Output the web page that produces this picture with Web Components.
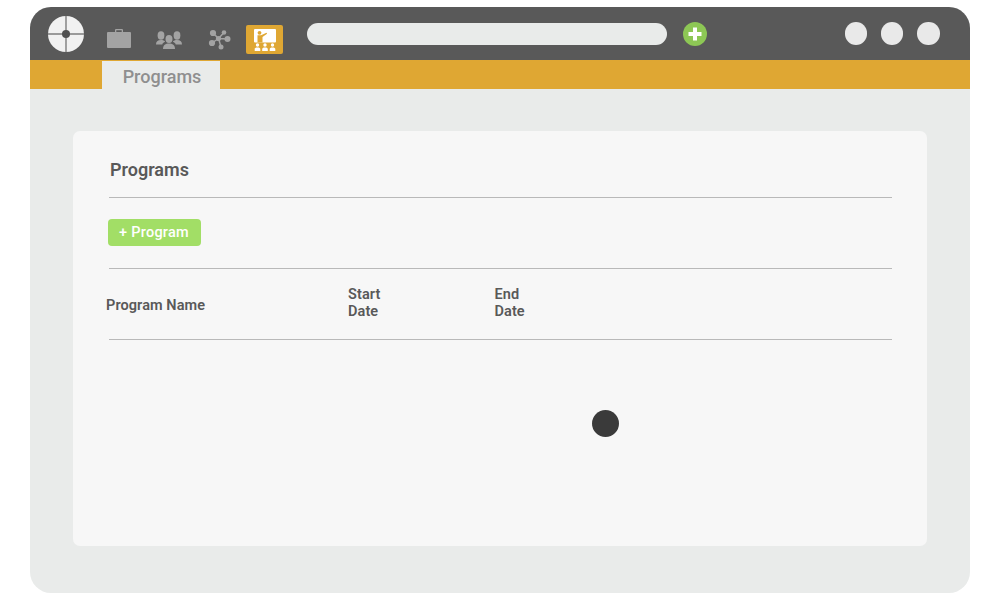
<!DOCTYPE html>
<html>
<head>
<meta charset="utf-8">
<title>Programs</title>
<style>
  html, body { margin: 0; height: 100%; background: #fff; font-family: Roboto, "Liberation Sans", sans-serif; }
  body { padding: 7px 30px; box-sizing: border-box; height: 600px; overflow: hidden; }
</style>
</head>
<body>
<app-window>
  <top-bar slot="top"></top-bar>
  <tab-strip slot="top" label="Programs"></tab-strip>
  <programs-card></programs-card>
</app-window>

<script>
class AppWindow extends HTMLElement {
  constructor () {
    super();
    this.attachShadow({mode: 'open'}).innerHTML = `
    <style>
      :host {
        display: flex;
        flex-direction: column;
        height: 586px;
        background: #e9ebea;
        border-radius: 21px;
        overflow: hidden;
      }
      main {
        flex: 1;
        padding: 42px 43px 47px;
        display: flex;
      }
    </style>
    <slot name="top"></slot>
    <main><slot></slot></main>
    `;
  }
}

class TopBar extends HTMLElement {
  constructor () {
    super();
    this.attachShadow({mode: 'open'}).innerHTML = `
    <style>
      :host {
        display: flex;
        align-items: center;
        height: 53px;
        box-sizing: border-box;
        background: #595959;
        padding: 0 30.5px 0 17.5px;
      }
      svg { display: block; flex: none; }
      .logo { margin: 1px 23.5px 0 0; }
      .brief { margin: 10px 24px 0 0; }
      .people { margin: 13px 24px 0 0; }
      .net { margin: 11px 15px 0 0; }
      .active {
        width: 37px;
        height: 29px;
        margin: 12px 24px 0 0;
        background: #dfa733;
        border-radius: 2px;
        display: flex;
        align-items: center;
        justify-content: center;
        flex: none;
      }
      .search {
        width: 360px;
        height: 22px;
        margin-top: 1px;
        border-radius: 11px;
        background: #e9ebea;
        flex: none;
      }
      .plus { margin-left: 16px; }
      .dots { margin-left: auto; display: flex; gap: 13.7px; }
      .dots span { width: 22.5px; height: 22.5px; border-radius: 50%; background: #e9e9e9; }
    </style>
    <svg class="logo" width="36" height="36" viewBox="0 0 36 36">
      <circle cx="18" cy="18" r="18" fill="#f1f1f1"/>
      <path d="M0 18H36M18 0V36" stroke="#7d7d7d" stroke-width="1.4"/>
      <circle cx="18" cy="18" r="4" fill="#505050"/>
    </svg>
    <svg class="brief" width="24" height="19" viewBox="0 0 24 19" fill="#a3a3a3">
      <path d="M8 3V1.200C8 .5 8.500 0 9.200 0h5.600c.7 0 1.200.5 1.200 1.200V3h-1.300V1.300H9.300V3z"/>
      <rect y="3" width="24" height="16" rx="1"/>
    </svg>
    <svg class="people" width="28" height="18" viewBox="0 0 28 18" fill="#a3a3a3">
      <ellipse cx="6" cy="4.500" rx="3.400" ry="4.200"/>
      <path d="M1 13.500c0-3 1.500-4.500 5-4.500 2 0 3.500.5 4.200 1.800C8.500 11.500 7.500 12.300 7.300 13.500z"/>
      <ellipse cx="22" cy="4.500" rx="3.400" ry="4.200"/>
      <path d="M27 13.500c0-3-1.500-4.500-5-4.500-2 0-3.500.5-4.200 1.800 1.700.7 2.700 1.500 2.900 2.700z"/>
      <ellipse cx="14" cy="8" rx="3.500" ry="4"/>
      <path d="M8 18c0-3.800 2.500-5.500 6-5.500s6 1.700 6 5.500z"/>
    </svg>
    <svg class="net" width="24" height="22" viewBox="0 0 24 22" fill="#a3a3a3" stroke="#a3a3a3">
      <path d="M11.500 10.500L6 5M11.500 10.500L17 4.500M11.500 10.500L20.500 11M11.500 10.500L14 19M11.500 10.500L5 15" stroke-width="1.500"/>
      <g stroke="none">
        <circle cx="11.500" cy="10.500" r="2.600"/>
        <circle cx="6" cy="5" r="3.100"/>
        <circle cx="17" cy="4.500" r="2.300"/>
        <circle cx="20.500" cy="11" r="3"/>
        <circle cx="14" cy="19" r="2.500"/>
        <circle cx="5" cy="15" r="3.100"/>
      </g>
    </svg>
    <span class="active">
      <svg width="22" height="22" viewBox="0 0 22 22">
        <rect x="0" y="0" width="22" height="13.500" rx="1" fill="#fff"/>
        <circle cx="5.500" cy="3.800" r="1.900" fill="#dfa733"/>
        <path d="M3.500 6.300h3.500l5.500-2.600.6 1.100L8.500 8v5.500H3.500z" fill="#dfa733"/>
        <g fill="#fff">
          <circle cx="3.500" cy="16" r="1.700"/><path d="M.7 22v-2c0-1 .9-1.600 2.800-1.600s2.800.6 2.800 1.600v2z"/>
          <circle cx="11" cy="16" r="1.700"/><path d="M8.200 22v-2c0-1 .9-1.600 2.800-1.600s2.800.6 2.800 1.600v2z"/>
          <circle cx="18.500" cy="16" r="1.700"/><path d="M15.700 22v-2c0-1 .9-1.600 2.800-1.600s2.800.6 2.800 1.600v2z"/>
        </g>
      </svg>
    </span>
    <span class="search"></span>
    <svg class="plus" width="24" height="24" viewBox="0 0 24 24">
      <circle cx="12" cy="12" r="12" fill="#8dc755"/>
      <path d="M12 5.500v13M5.500 12h13" stroke="#fff" stroke-width="4"/>
    </svg>
    <span class="dots"><span></span><span></span><span></span></span>
    `;
  }
}

class TabStrip extends HTMLElement {
  constructor () {
    super();
    this.attachShadow({mode: 'open'}).innerHTML = `
    <style>
      :host {
        display: flex;
        height: 29px;
        background: #dfa733;
        padding-left: 72px;
      }
      span {
        width: 118px;
        box-sizing: border-box;
        padding-left: 2px;
        margin-top: 1px;
        background: #e9ebea;
        color: #8f8f8f;
        font: 500 18px/32px Roboto, sans-serif;
        text-align: center;
      }
    </style>
    <span>${this.getAttribute('label')}</span>
    `;
  }
}

class ProgramsCard extends HTMLElement {
  constructor () {
    super();
    this.attachShadow({mode: 'open'}).innerHTML = `
    <style>
      :host {
        display: block;
        position: relative;
        flex: 1;
        box-sizing: border-box;
        background: #f7f7f7;
        border-radius: 7px;
        padding: 0 35.5px 0 36px;
        color: #595959;
        font-family: Roboto, sans-serif;
      }
      h2 {
        margin: 0;
        height: 67px;
        box-sizing: border-box;
        padding: 28px 0 0 1px;
        font: 600 18px/22px Roboto, sans-serif;
        border-bottom: 1px solid #b9b9b9;
      }
      .actions {
        height: 71px;
        box-sizing: border-box;
        padding-top: 21px;
        border-bottom: 1px solid #b9b9b9;
      }
      button {
        display: block;
        width: 93px;
        height: 27px;
        margin-left: -1.5px;
        padding: 1px 0 0;
        border: 0;
        border-radius: 4px;
        background: #a2de66;
        color: #fff;
        font: 500 14.5px/26px Roboto, sans-serif;
        letter-spacing: .25px;
      }
      .head {
        height: 71px;
        box-sizing: border-box;
        display: grid;
        grid-template-columns: 239px 146.5px 1fr;
        align-items: center;
        padding-bottom: 3px;
        border-bottom: 1px solid #b9b9b9;
        font: 600 14.5px/17px Roboto, sans-serif;
        letter-spacing: .08px;
      }
      .head span { display: block; }
      .head .name { margin: 5px 0 0 -3px; }
      .spinner {
        position: absolute;
        left: 518.5px;
        top: 278.5px;
        width: 27px;
        height: 27px;
        border-radius: 50%;
        background: #3a3a3a;
      }
    </style>
    <h2>Programs</h2>
    <div class="actions"><button>+ Program</button></div>
    <div class="head">
      <span class="name">Program Name</span>
      <span>Start<br>Date</span>
      <span>End<br>Date</span>
    </div>
    <div class="spinner"></div>
    `;
  }
}

customElements.define('app-window', AppWindow);
customElements.define('top-bar', TopBar);
customElements.define('tab-strip', TabStrip);
customElements.define('programs-card', ProgramsCard);
</script>
</body>
</html>
